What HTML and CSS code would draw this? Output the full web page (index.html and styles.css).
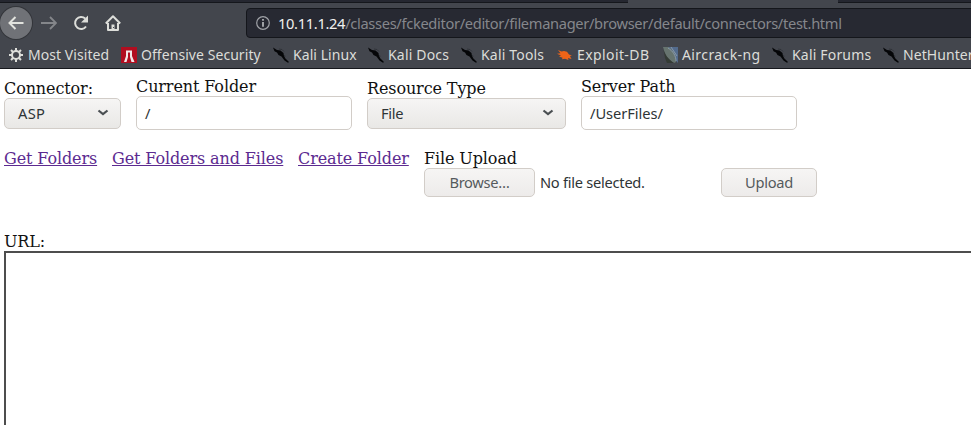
FILE: index.html
```html
<!DOCTYPE html>
<html lang="en">
<head>
<meta charset="utf-8">
<title>Connectors Test</title>
<link rel="stylesheet" href="styles.css">
</head>
<body>
<svg width="0" height="0" class="defs">
  <symbol id="kali" viewBox="0 0 16 16"><path d="M0 .5l4 2.500 3.500.5L10.500 6l.3 2.300 1.400 3L16 15l-1 .8-3.500-2.300L8.500 9.500 5.500 8 4 5.500 1.500 4.200z" fill="#050608"/><path d="M6 2l3 .5 2 2M11.500 8l.5 2" fill="none" stroke="#2c2f35" stroke-width=".8"/></symbol>
  <symbol id="chev" viewBox="0 0 12 8"><path d="M1.500 1.500L6 5.200l4.500-3.700" fill="none" stroke="#4a4f52" stroke-width="2.200"/></symbol>
</svg>
<header class="browser">
  <div class="tabs"><div class="active"></div></div>
  <nav class="toolbar">
    <span class="back"><svg width="16" height="14" viewBox="0 0 16 14"><path d="M15.500 7H2M7.500 1L1.500 7l6 6" fill="none" stroke="#e2e3de" stroke-width="2"/></svg></span>
    <svg class="fwd" width="16" height="14" viewBox="0 0 16 14"><path d="M0 7h14M9 1l6 6-6 6" fill="none" stroke="#84868a" stroke-width="1.800"/></svg>
    <svg class="reload" width="16" height="16" viewBox="0 0 16 16"><path d="M12.200 3.600A6 6 0 1 0 13 11.500" fill="none" stroke="#dddeda" stroke-width="2"/><path d="M15 .500v7H8z" fill="#dddeda"/></svg>
    <svg class="home" width="16" height="16" viewBox="0 0 16 16"><path d="M.8 8.500L8 1.300l7.200 7.200M3 8v7h10V8" fill="none" stroke="#dddeda" stroke-width="2" stroke-linejoin="round"/><path d="M6.500 15V9.500h3V15" fill="#dddeda"/><path d="M8.500 12v1" stroke="#43464d"/></svg>
    <div class="address">
      <svg width="14" height="14" viewBox="0 0 14 14"><circle cx="7" cy="7" r="6.300" fill="none" stroke="#a0a2a7" stroke-width="1.200"/><path d="M7 3v1.700M7 6v4.700" stroke="#b6b7ba" stroke-width="1.700"/></svg>
      <span class="url"><b>10.11.1.24</b>/classes/fckeditor/editor/filemanager/browser/default/connectors/test.html</span>
    </div>
  </nav>
  <div class="bookmarks">
    <a class="w1"><svg viewBox="0 0 16 16"><circle cx="8" cy="8" r="4" fill="none" stroke="#dddeda" stroke-width="2"/><path d="M8 1v3M8 12v3M1 8h3M12 8h3M3 3l2 2M11 11l2 2M13 3l-2 2M5 11l-2 2" stroke="#dddeda" stroke-width="2"/></svg><span>Most Visited</span></a>
    <a class="w2"><svg viewBox="0 0 16 16"><path d="M0 0h16v16H0z" fill="#b10e20"/><path d="M5 3.500h6V9l2.500 6h-3L9 10V5.500H7V10l-1.500 5H3l2-6z" fill="#f1e9e9"/></svg><span>Offensive Security</span></a>
    <a class="w3"><svg><use href="#kali"/></svg><span>Kali Linux</span></a>
    <a class="w4"><svg><use href="#kali"/></svg><span>Kali Docs</span></a>
    <a class="w5"><svg><use href="#kali"/></svg><span>Kali Tools</span></a>
    <a class="w6"><svg viewBox="0 0 16 16"><path d="M1 3l3.500 1.500L7 4l3 .8L12 7.500l3 1-2 .5 1.500 3-3.500-1 .5 2L8 11.700l-3 .5.5-1.500L2 9.500l2-1L0 6.700l3.500-.5z" fill="#ed6418"/></svg><span>Exploit-DB</span></a>
    <a class="w7"><svg viewBox="0 0 16 16"><path d="M1 0h15v16z" fill="#536b8d"/><path d="M1 0h5c6 3 8 8 8 15l-2 1C6 13 3 8 1 0z" fill="#67746f"/><path d="M1 0c1 7 5 12 11 16H5L3 11z" fill="#343b35"/><path d="M6 1c5 3 8 8 8 13M9 0l6 9" fill="none" stroke="#8999a8"/></svg><span>Aircrack-ng</span></a>
    <a class="w8"><svg><use href="#kali"/></svg><span>Kali Forums</span></a>
    <a class="w9"><svg><use href="#kali"/></svg><span>NetHunter</span></a>
  </div>
</header>
<main>
  <section class="fields">
    <div class="field connector"><label>Connector:</label><div class="select">ASP<svg width="12" height="8"><use href="#chev"/></svg></div></div>
    <div class="field folder"><label>Current Folder</label><div class="input">/</div></div>
    <div class="field type"><label>Resource Type</label><div class="select">File<svg width="12" height="8"><use href="#chev"/></svg></div></div>
    <div class="field path"><label>Server Path</label><div class="input">/UserFiles/</div></div>
  </section>
  <section class="actions">
    <div class="a1"><a>Get Folders</a></div><div class="a2"><a>Get Folders and Files</a></div><div class="a3"><a>Create Folder</a></div>
    <div class="upload"><label>File Upload</label>
      <div class="row"><div class="button browse">Browse…</div><span class="none">No file selected.</span><div class="button send">Upload</div></div>
    </div>
  </section>
  <div class="urllabel">URL:</div>
  <div class="frame"></div>
</main>
</body>
</html>
```
FILE: styles.css
```css
* { box-sizing: border-box; }
body { margin: 0; width: 971px; height: 425px; overflow: hidden; background: #fff; color: #111; font: 16px/19px "DejaVu Serif", serif; letter-spacing: -0.11px; }
.defs { display: block; }
.browser { height: 69px; background: #43464d; border-bottom: 1px solid #16181d; font-family: "Noto Sans", sans-serif; overflow: hidden; letter-spacing: 0; }
.tabs { height: 3px; background: #252730; border-bottom: 1px solid #15171c; }
.active { width: 210px; height: 3px; margin-left: 628px; background: #43464d; }
.toolbar { height: 40px; display: flex; align-items: center; }
.toolbar > * { flex: none; }
.back { width: 32px; height: 32px; border-radius: 50%; background: #707277; box-shadow: 0 0 0 1px #33353a; display: flex; align-items: center; justify-content: center; }
.fwd { margin-left: 9px; }
.reload { margin-left: 16px; }
.home { margin-left: 16px; }
.address { width: 760px; height: 30px; margin-left: 125px; border: 1px solid #14161b; border-radius: 4px; background: #272932; display: flex; align-items: center; padding-left: 9px; }
.address svg { flex: none; }
.url { margin-left: 8px; color: #85878c; font-size: 14.67px; letter-spacing: -0.33px; white-space: nowrap; }
.url b { color: #f0f0ee; font-weight: 400; }
.bookmarks { display: flex; height: 24px; margin-left: 8px; align-items: center; font-size: 14px; color: #dcddd9; }
.bookmarks a { display: flex; align-items: center; flex: none; white-space: nowrap; }
.bookmarks span { margin-top: -2px; letter-spacing: 0.06px; }
.bookmarks svg { width: 16px; height: 16px; margin-right: 4px; flex: none; }
.w1 { width: 113px; }
.w2 { width: 152px; }
.w3 { width: 95px; }
.w4 { width: 93px; }
.w5 { width: 96px; }
.w6 { width: 105px; }
.w7 { width: 110px; }
.w8 { width: 111px; }
.bookmarks .w4 span, .bookmarks .w5 span, .bookmarks .w8 span { letter-spacing: 0.18px; }
.bookmarks .w6 span, .bookmarks .w7 span { letter-spacing: 0.4px; }
main { padding-left: 4px; }
label { display: block; white-space: nowrap; }
.fields { display: flex; gap: 15px; height: 80px; padding-top: 8px; }
.connector { width: 117px; padding-top: 2px; }
.folder { width: 216px; }
.type { width: 199px; padding-top: 2px; }
.path { width: 216px; }
.select, .input, .button { border: 1px solid #d2cdc8; border-radius: 5px; font: 14.67px/20px "Noto Sans", sans-serif; letter-spacing: -0.3px; color: #2e3436; display: flex; align-items: center; }
.select { height: 31px; background: linear-gradient(#f6f5f4, #e9e8e6); padding: 0 11px 1px 13px; justify-content: space-between; }
.connector .select { letter-spacing: 0.3px; }
.input { height: 34px; padding: 0 0 1px 8px; letter-spacing: -0.05px; }
.actions { display: flex; height: 83px; }
.actions a { color: #5c2a90; text-decoration: underline; white-space: nowrap; }
.a1 { width: 108px; }
.a2 { width: 186px; }
.a3 { width: 126px; }
.row { display: flex; align-items: center; font: 14.67px/20px "Noto Sans", sans-serif; letter-spacing: -0.27px; color: #2e3436; }
.button { height: 29px; background: linear-gradient(#f6f5f4, #edebea); justify-content: center; color: #555a5c; padding-bottom: 2px; }
.browse { width: 111px; }
.none { width: 181px; margin-left: 5px; padding-bottom: 2px; white-space: nowrap; }
.send { width: 96px; }
.urllabel { height: 19px; }
.frame { width: 1000px; height: 190px; border: 2px solid #4d4d4d; }
```
